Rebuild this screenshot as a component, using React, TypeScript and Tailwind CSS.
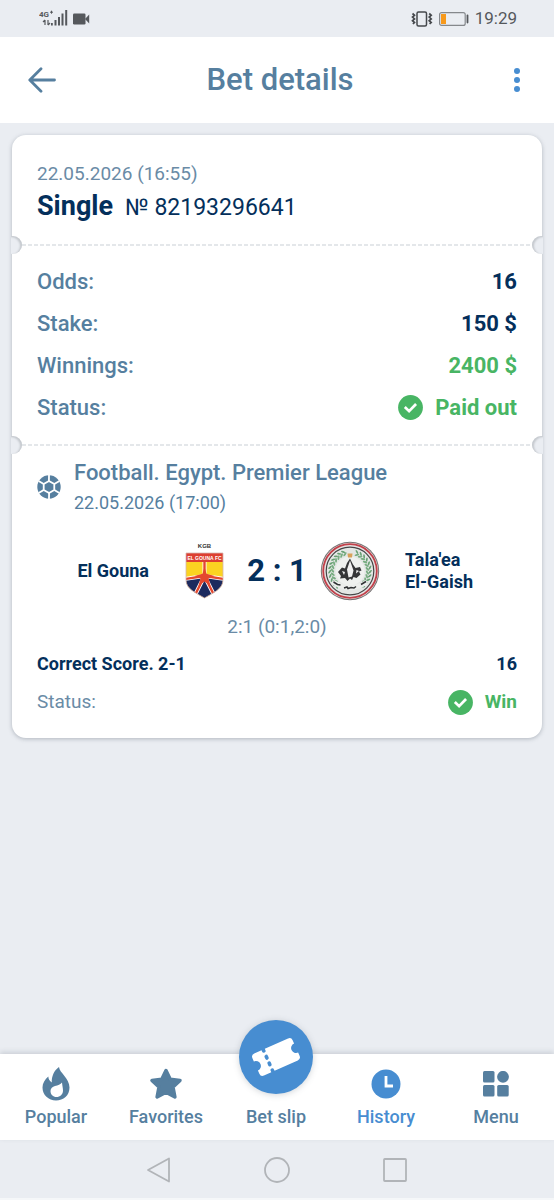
import React from 'react';
import clsx from 'clsx';

type NavItem = {
  label: string;
  icon: React.ReactNode;
  active?: boolean;
};

const SignalIcon = () => (
  <svg width="30" height="20" viewBox="0 0 30 20" fill="#55585c" aria-hidden="true">
    <text x="0" y="8" fontFamily="Roboto, sans-serif" fontSize="8" fontWeight="700">4G</text>
    <path d="M11 3.2h3M12.5 1.7v3" stroke="#55585c" strokeWidth="1" />
    <path d="M6 11v5M4 13l2-2M9 11v5M11 14l-2 2" stroke="#55585c" strokeWidth="1.2" fill="none" />
    <rect x="12" y="14" width="1.8" height="2.5" />
    <rect x="15.5" y="11" width="2" height="5.5" />
    <rect x="19" y="8" width="2" height="8.5" />
    <rect x="22.5" y="4.5" width="2" height="12" />
    <rect x="26.2" y="1" width="2" height="15.5" />
  </svg>
);

const CameraIcon = () => (
  <svg width="17" height="12" viewBox="0 0 17 12" fill="#55585c" aria-hidden="true">
    <rect x="0" y="0.5" width="12.5" height="11" rx="1.2" />
    <path d="M12 6l4.2-4.5v9z" />
  </svg>
);

const VibrateIcon = () => (
  <svg width="22" height="16" viewBox="0 0 22 16" fill="none" stroke="#45484c" aria-hidden="true">
    <rect x="6" y="1" width="9.5" height="14" rx="1.5" strokeWidth="1.5" />
    <path d="M1.500 2.500l2 1.800-2 1.800 2 1.800-2 1.800 2 1.800-1.600 1.500M18.200 2.500l2 1.800-2 1.800 2 1.800-2 1.800 2 1.800-1.600 1.500" strokeWidth="1.700" />
  </svg>
);

const BatteryIcon = () => (
  <svg width="30" height="14" viewBox="0 0 30 14" fill="none" aria-hidden="true">
    <rect x="0.6" y="0.6" width="25.6" height="12.8" rx="2" stroke="#85888c" strokeWidth="1.2" />
    <rect x="2" y="2" width="5" height="10" fill="#f7991c" />
    <rect x="27.6" y="2.6" width="1.8" height="8.8" rx="0.8" fill="#55585c" />
  </svg>
);

const BackIcon = () => (
  <svg width="28" height="26" viewBox="0 0 28 26" fill="none" stroke="#567f9f" strokeWidth="2.8" strokeLinecap="round" strokeLinejoin="round" aria-hidden="true">
    <path d="M26.5 13H2M13 1.8L1.8 13 13 24.2" />
  </svg>
);

const BallIcon = () => (
  <svg width="24" height="24" viewBox="0 0 24 24" className="shrink-0" aria-hidden="true">
    <circle cx="12" cy="12" r="11.7" fill="#567f9f" />
    <g stroke="#fff" strokeWidth="1.8" fill="none" transform="rotate(30 12 12)">
      <path d="M8.900 6.800h6.200l3 5.200-3 5.200H8.900L5.900 12z" />
      <path d="M8.900 6.800L6 1.600M15.100 6.800L18 1.600M18.100 12H24M15.100 17.200l2.900 5.200M8.900 17.200L6 22.400M5.900 12H0" />
    </g>
  </svg>
);

const CheckIcon = () => (
  <svg width="25" height="25" viewBox="0 0 25 25" aria-hidden="true">
    <circle cx="12.5" cy="12.5" r="12.4" fill="#48b564" />
    <path d="M7.8 13l3.3 3.2 6-6.2" fill="none" stroke="#fff" strokeWidth="2.7" strokeLinecap="square" />
  </svg>
);

const ElGounaCrest = () => (
  <svg width="60" height="64" viewBox="0 0 60 64" role="img" aria-label="El Gouna crest">
    <defs>
      <clipPath id="shield">
        <path d="M12 14h37v27c0 9-10 13-18.500 18C22 54 12 50 12 41z" />
      </clipPath>
    </defs>
    <text x="30.500" y="9" textAnchor="middle" fontFamily="Liberation Sans Narrow, Liberation Sans, sans-serif" fontSize="6" fill="#333">KGB</text>
    <g clipPath="url(#shield)">
      <rect x="11" y="13" width="39" height="48" fill="#fbd321" />
      <path d="M11 39l19.500-1L50 39v22H11z" fill="#1d2a5e" />
      <g stroke="#fff" strokeWidth="4">
        <path d="M30.500 22v15M30.500 37L11 40M30.500 37L50 40M30.500 37l-10 20M30.500 37l10 20" />
      </g>
      <g stroke="#e4472e" strokeWidth="2.400">
        <path d="M30.500 22v15M30.500 37L11 40M30.500 37L50 40M30.500 37l-10 20M30.500 37l10 20" />
      </g>
      <path d="M30.500 28l2 6.700 8 2.300-6 2.600 2 7.200-6-4.300-6 4.300 2-7.200-6-2.600 8-2.300z" fill="#e4472e" />
      <rect x="11" y="13" width="39" height="10" fill="#dd3f31" />
    </g>
    <path d="M12 14h37v27c0 9-10 13-18.500 18C22 54 12 50 12 41z" fill="none" stroke="#d5b5b0" strokeWidth="0.8" />
    <text x="30.500" y="20.600" textAnchor="middle" fontFamily="Liberation Sans, sans-serif" fontSize="5" fontWeight="700" fill="#fff">EL GOUNA FC</text>
  </svg>
);

// Leaves of the wreath, as angles clockwise from the bottom
const LEAVES = [40, 52, 64, 76, 88, 100, 112, 124, 136, 148, 160, 200, 212, 224, 236, 248, 260, 272, 284, 296, 308, 320];

const ElGaishCrest = () => (
  <svg width="60" height="60" viewBox="0 0 60 60" role="img" aria-label="Tala'ea El-Gaish crest">
    <circle cx="30" cy="30" r="29.200" fill="#777273" />
    <circle cx="30" cy="30" r="28.200" fill="#e6e2e2" />
    <circle cx="30" cy="30" r="26.800" fill="none" stroke="#c2404a" strokeWidth="1.800" />
    <circle cx="30" cy="30" r="23.800" fill="#e4e7e5" stroke="#454647" strokeWidth="1.200" />
    {LEAVES.map((a) => (
      <g key={a} transform={`rotate(${a} 30 30)`}>
        <ellipse cx="29" cy="47.500" rx="1" ry="2.400" transform="rotate(55 29 47.500)" fill="#78ad82" />
        <ellipse cx="30" cy="50.300" rx="0.900" ry="2.200" transform="rotate(-50 30 50.300)" fill="#68a174" />
      </g>
    ))}
    <circle cx="30" cy="30" r="14.500" fill="#eff1ef" />
    <path d="M27.500 12.500h5l-.5 4h-4z" fill="#d8a15a" />
    <path d="M30 17.500l3 6 2.500 3.500 4.500-1 1.500 3.500-2.500 1 1.500 3-4 3.500-3-1-1.500 3-2-1.500-2.500 2.500-2.500-3-5 .5 1-2.500-3-4 4-4.500 3 1 2-5.500z" fill="#353638" />
    <path d="M30 19.500l3.500 10-1.500 6-3.500 1-1.500-8zM22 30l3 1-1 3zM36.500 29l2.500 1-3 2.500z" fill="#f0f0f0" />
    <path d="M13 41q17 11 34 0" fill="none" stroke="#eceeec" strokeWidth="5" />
    <path d="M13.500 41l4 2.500 3 .500M24 47l3-1 1 1.500 3-1 3 .500 2-1.500M41 43.500l5-3" fill="none" stroke="#303234" strokeWidth="1.500" />
  </svg>
);

const FlameIcon = () => (
  <svg width="28" height="34" viewBox="0 0 28 34" aria-hidden="true">
    <path d="M17 0c.5 6 10.500 11 10.500 20.500C27.500 28.500 21.500 33.500 14 33.500S.5 28 .5 20.500C.5 16 3 12.500 6.300 9.500c.2 2.700 1.400 4.600 3.500 6C9.500 9.500 12 3.500 17 0z" fill="#567f9f" />
    <path d="M20 15.500c.5 4.500 1 5.500 1 8 0 4-3 6.500-6.500 6.500S8.500 27.500 8.500 24c0-2.500 2-4.500 4.500-5 3-.5 5.500-1.500 7-3.500z" fill="#fff" />
  </svg>
);

const StarIcon = () => (
  <svg width="34" height="34" viewBox="0 0 34 34" fill="#567f9f" stroke="#567f9f" strokeWidth="3.500" strokeLinejoin="round" aria-hidden="true">
    <path d="M17 3.500l4.200 8.700 9.800 1.200-7 6.600 1.900 10L17 25.300 8.100 30l1.900-10-7-6.600 9.800-1.200z" />
  </svg>
);

const TicketIcon = () => (
  <svg width="50" height="50" viewBox="0 0 50 50" aria-hidden="true">
    <g transform="rotate(-24 25 25)">
      <path d="M6.500 13h8v1.500a1.800 1.800 0 0 0 3.600 0V13H43.500a3.500 3.500 0 0 1 3.500 3.500v3.500a5 5 0 0 0 0 10V33.500a3.500 3.500 0 0 1-3.500 3.500H18.100V35.500a1.800 1.800 0 0 0-3.600 0V37H6.500A3.500 3.500 0 0 1 3 33.500V30a5 5 0 0 0 0-10V16.500A3.500 3.500 0 0 1 6.500 13z" fill="#fff" />
      <rect x="14.500" y="18.800" width="3.600" height="5.200" rx="1.700" fill="#478dd1" />
      <rect x="14.500" y="26" width="3.600" height="5.200" rx="1.700" fill="#478dd1" />
    </g>
  </svg>
);

const ClockIcon = () => (
  <svg width="30" height="30" viewBox="0 0 30 30" aria-hidden="true">
    <circle cx="15" cy="15" r="14.500" fill="#478dd1" />
    <path d="M15 7v10h7" fill="none" stroke="#fff" strokeWidth="2.800" />
  </svg>
);

const GridIcon = () => (
  <svg width="26" height="26" viewBox="0 0 26 26" fill="#567f9f" aria-hidden="true">
    <rect x="0" y="0" width="11.500" height="11.500" rx="1.500" />
    <circle cx="20" cy="5.800" r="5.900" />
    <rect x="0" y="14" width="11.500" height="11.500" rx="1.500" />
    <rect x="14.200" y="14" width="11.500" height="11.500" rx="1.500" />
  </svg>
);

const NAV: NavItem[] = [
  { label: 'Popular', icon: <FlameIcon /> },
  { label: 'Favorites', icon: <StarIcon /> },
  { label: 'Bet slip', icon: null },
  { label: 'History', icon: <ClockIcon />, active: true },
  { label: 'Menu', icon: <GridIcon /> },
];

// Perforated line with a punched notch at either edge of the card
const TearLine = () => (
  <div className="relative h-px" role="separator">
    <svg width="100%" height="2" className="block px-[10px]" aria-hidden="true">
      <line x1="0" y1="1" x2="100%" y2="1" stroke="#dcdfe3" strokeWidth="1.500" strokeDasharray="4 2" />
    </svg>
    <span className="absolute -left-px -top-2 h-[18px] w-[11px] rounded-r-full bg-[#eaedf2] shadow-[inset_-2px_1px_2px_#c5c9ce]" />
    <span className="absolute -right-px -top-2 h-[18px] w-[11px] rounded-l-full bg-[#eaedf2] shadow-[inset_2px_1px_2px_#c5c9ce]" />
  </div>
);

const Row = ({ label, children }: { label: string; children: React.ReactNode }) => (
  <div className="flex h-[42px] items-center justify-between text-[22px]">
    <dt className="font-medium text-[#567f9f]">{label}</dt>
    <dd className="flex items-center gap-3 font-bold text-[#042f5b]">{children}</dd>
  </div>
);

const App: React.FC = () => {
  return (
    <div className="flex min-h-screen flex-col bg-[#eaedf2] font-['Roboto',sans-serif] text-[#042f5b]">
      {/* Status bar */}
      <div className="flex h-[37px] items-center justify-between pl-[39px] pr-[37px]">
        <div className="flex items-center gap-1">
          <SignalIcon />
          <CameraIcon />
        </div>
        <div className="flex items-center gap-[6px] text-[#55585c]">
          <VibrateIcon />
          <BatteryIcon />
          <span className="text-[17px]">19:29</span>
        </div>
      </div>

      <header className="flex h-[86px] items-center justify-between bg-white pl-7 pr-[34px]">
        <button type="button" aria-label="Back">
          <BackIcon />
        </button>
        <h1 className="text-[31px] font-medium leading-9 text-[#567f9f]">Bet details</h1>
        <button type="button" aria-label="More options" className="flex w-4 flex-col items-end gap-[3px]">
          <span className="size-[6px] rounded-full bg-[#478dd1]" />
          <span className="size-[6px] rounded-full bg-[#478dd1]" />
          <span className="size-[6px] rounded-full bg-[#478dd1]" />
        </button>
      </header>

      <main className="flex-1 px-3 pt-3">
        <article className="rounded-[14px] bg-white shadow-[0_1px_4px_rgba(70,80,95,0.35)]">
          <section className="px-[25px] pb-4 pt-[27px]">
            <p className="text-[19px] leading-6 text-[#6a8ba6]">22.05.2026 (16:55)</p>
            <div className="flex items-baseline gap-3 leading-10">
              <h2 className="text-[27px] font-bold">Single</h2>
              <span className="text-[23px]">№ 82193296641</span>
            </div>
          </section>

          <TearLine />

          <dl className="px-[25px] pb-4 pt-[15px]">
            <Row label="Odds:">16</Row>
            <Row label="Stake:">150 $</Row>
            <Row label="Winnings:">
              <span className="text-[#48b564]">2400 $</span>
            </Row>
            <Row label="Status:">
              <CheckIcon />
              <span className="text-[#48b564]">Paid out</span>
            </Row>
          </dl>

          <TearLine />

          <section className="px-[25px] pb-4 pt-3">
            <div className="flex items-center gap-[13px] text-[#567f9f]">
              <BallIcon />
              <div>
                <h3 className="text-[22px] font-medium leading-8">Football. Egypt. Premier League</h3>
                <p className="text-lg leading-7">22.05.2026 (17:00)</p>
              </div>
            </div>

            <div className="mt-[22px] grid grid-cols-[1fr_60px_86px_60px_1fr] items-center text-lg font-bold">
              <span className="pr-[25px] text-right">El Gouna</span>
              <ElGounaCrest />
              <span className="text-center text-[31px]">2 : 1</span>
              <ElGaishCrest />
              <span className="pl-[25px] leading-[22px]">
                Tala'ea
                <br />
                El-Gaish
              </span>
            </div>

            <p className="mt-3 text-center text-[19px] leading-6 text-[#6a8ba6]">2:1 (0:1,2:0)</p>

            <div className="mt-[6px] flex h-[37px] items-center justify-between text-lg font-bold">
              <span>Correct Score. 2-1</span>
              <span>16</span>
            </div>
            <div className="flex h-10 items-center justify-between text-[19px]">
              <span className="text-[#6a8ba6]">Status:</span>
              <span className="flex items-center gap-3 font-bold text-[#48b564]">
                <CheckIcon />
                Win
              </span>
            </div>
          </section>
        </article>
      </main>

      <nav className="bg-white pl-px pr-[3px] shadow-[0_-2px_5px_rgba(80,90,105,0.2)]">
        <ul className="grid grid-cols-5">
          {NAV.map((item) => (
            <li key={item.label}>
              <a
                href="#"
                className={clsx(
                  'relative flex h-[86px] flex-col items-center pt-[11px] text-lg font-medium',
                  item.active ? 'text-[#478dd1]' : 'text-[#567f9f]',
                )}
              >
                <span className="flex h-[38px] items-center">{item.icon}</span>
                {item.label === 'Bet slip' && (
                  <span className="absolute -top-[34px] flex size-[74px] items-center justify-center rounded-full bg-[#478dd1] shadow-[0_1px_6px_rgba(80,90,105,0.25)]">
                    <TicketIcon />
                  </span>
                )}
                {item.label}
              </a>
            </li>
          ))}
        </ul>
      </nav>

      {/* System navigation */}
      <div className="grid h-[60px] grid-cols-[1fr_26px_92px_26px_92px_26px_1fr] items-center border-b-2 border-[#f5f7f9] pt-0.5">
        <button type="button" aria-label="System back" className="col-start-2">
          <svg width="26" height="28" viewBox="0 0 26 28" fill="none" stroke="#b1b4b8" strokeWidth="1.800" strokeLinejoin="round">
            <path d="M23 2.500v23L2 14z" />
          </svg>
        </button>
        <button type="button" aria-label="Home" className="col-start-4">
          <svg width="26" height="26" viewBox="0 0 26 26" fill="none" stroke="#b1b4b8" strokeWidth="1.800">
            <circle cx="13" cy="13" r="12" />
          </svg>
        </button>
        <button type="button" aria-label="Recent apps" className="col-start-6">
          <svg width="26" height="26" viewBox="0 0 26 26" fill="none" stroke="#b1b4b8" strokeWidth="1.800">
            <rect x="2" y="2" width="22" height="22" rx="0.800" />
          </svg>
        </button>
      </div>
    </div>
  );
};

export default App;
